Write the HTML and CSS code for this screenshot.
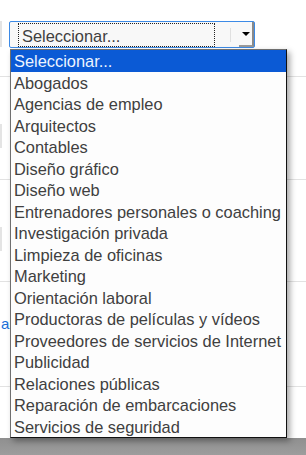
FILE: index.html
```html
<!DOCTYPE html>
<html lang="es">
<head>
    <meta charset="UTF-8">
    <meta name="viewport" content="width=device-width, initial-scale=1.0">
    <title>Seleccionar</title>
    <link rel="stylesheet" href="styles.css">
</head>
<body>
    <div class="page">
        <div class="row row-first">
            <div class="stub"></div>
            <div class="select">
                <div class="select-value">Seleccionar...</div>
                <div class="select-sep"></div>
                <div class="select-arrow"><span class="tri"></span></div>
            </div>
        </div>
        <div class="row row-two">
            <div class="stub stub-mid"></div>
        </div>
        <div class="row row-three">
            <div class="stub stub-mid"></div>
        </div>
        <div class="row row-four">
            <span class="link">a</span>
        </div>
        <div class="row row-last"></div>
        <div class="bottom-bar"></div>
    </div>

    <!-- open dropdown menu, lies over the page -->
    <ul class="menu">
        <li class="option selected">Seleccionar...</li>
        <li class="option">Abogados</li>
        <li class="option">Agencias de empleo</li>
        <li class="option">Arquitectos</li>
        <li class="option">Contables</li>
        <li class="option">Diseño gráfico</li>
        <li class="option">Diseño web</li>
        <li class="option">Entrenadores personales o coaching</li>
        <li class="option">Investigación privada</li>
        <li class="option">Limpieza de oficinas</li>
        <li class="option">Marketing</li>
        <li class="option">Orientación laboral</li>
        <li class="option">Productoras de películas y vídeos</li>
        <li class="option">Proveedores de servicios de Internet</li>
        <li class="option">Publicidad</li>
        <li class="option">Relaciones públicas</li>
        <li class="option">Reparación de embarcaciones</li>
        <li class="option">Servicios de seguridad</li>
    </ul>
</body>
</html>
```

FILE: styles.css
```css
body {
    margin: 0;
    width: 306px;
    height: 455px;
    overflow: hidden;
    position: relative;
    background: #fff;
    font-family: "Liberation Sans", Arial, sans-serif;
    font-size: 16.4px;
    color: #404040;
}
.page {
    display: flex;
    flex-direction: column;
    height: 455px;
}
.row {
    border-bottom: 1px solid #e2e2e2;
    position: relative;
}
.row-first {
    height: 77px;
    display: flex;
    align-items: flex-start;
    padding-top: 21px;
    box-sizing: border-box;
}
.row-two {
    height: 103px;
    padding-top: 47px;
    box-sizing: border-box;
}
.row-three {
    height: 102px;
    padding-top: 47px;
    box-sizing: border-box;
}
.row-four {
    height: 105px;
    padding-top: 33px;
    box-sizing: border-box;
}
.row-last {
    flex: 1;
    border-bottom: none;
}
.stub {
    width: 2px;
    height: 26px;
    background: #e4e4e4;
    margin-right: 7px;
}
.stub-mid {
    height: 24px;
}
.link {
    display: block;
    margin-left: 1px;
    color: #1a6fd8;
    font-size: 15px;
}
.bottom-bar {
    height: 17px;
    background: linear-gradient(#8f8f8f, #9d9d9d);
}

.select {
    width: 246px;
    height: 27px;
    box-sizing: border-box;
    border: 1px solid #3c8ae6;
    border-radius: 2px;
    background: #f8f8f8;
    display: flex;
    align-items: stretch;
}
.select-value {
    width: 197px;
    margin: 1px 0 0 8px;
    height: 24px;
    box-sizing: border-box;
    border: 1px dotted #222;
    padding-left: 3px;
    line-height: 24px;
    color: #404040;
}
.select-sep {
    width: 1px;
    background: #e0e0e0;
    margin: 6px 0 5px 15px;
}
.select-arrow {
    width: 15px;
    margin-left: 8px;
    box-sizing: border-box;
    border-right: 2px solid #8a8a8a;
    border-bottom: 2px solid #9a9a9a;
    display: flex;
    align-items: center;
    justify-content: center;
}
.tri {
    width: 0;
    height: 0;
    border-left: 4px solid transparent;
    border-right: 4px solid transparent;
    border-top: 4px solid #000;
    margin-top: 1px;
}

.menu {
    position: absolute;
    left: 10px;
    top: 49px;
    width: 277px;
    margin: 0;
    padding: 0;
    list-style: none;
    box-sizing: border-box;
    background: #fdfdfd;
    border-left: 1px solid #6f6f6f;
    border-top: 1px solid #6f6f6f;
    border-right: 1px solid #111;
    border-bottom: 1px solid #111;
    box-shadow: 3px 3px 6px rgba(0, 0, 0, 0.35);
}
.option {
    height: 21.5px;
    line-height: 22px;
    padding-left: 3px;
    white-space: nowrap;
}
.option.selected {
    background: #0b5ad5;
    color: #eef4ff;
}
```
